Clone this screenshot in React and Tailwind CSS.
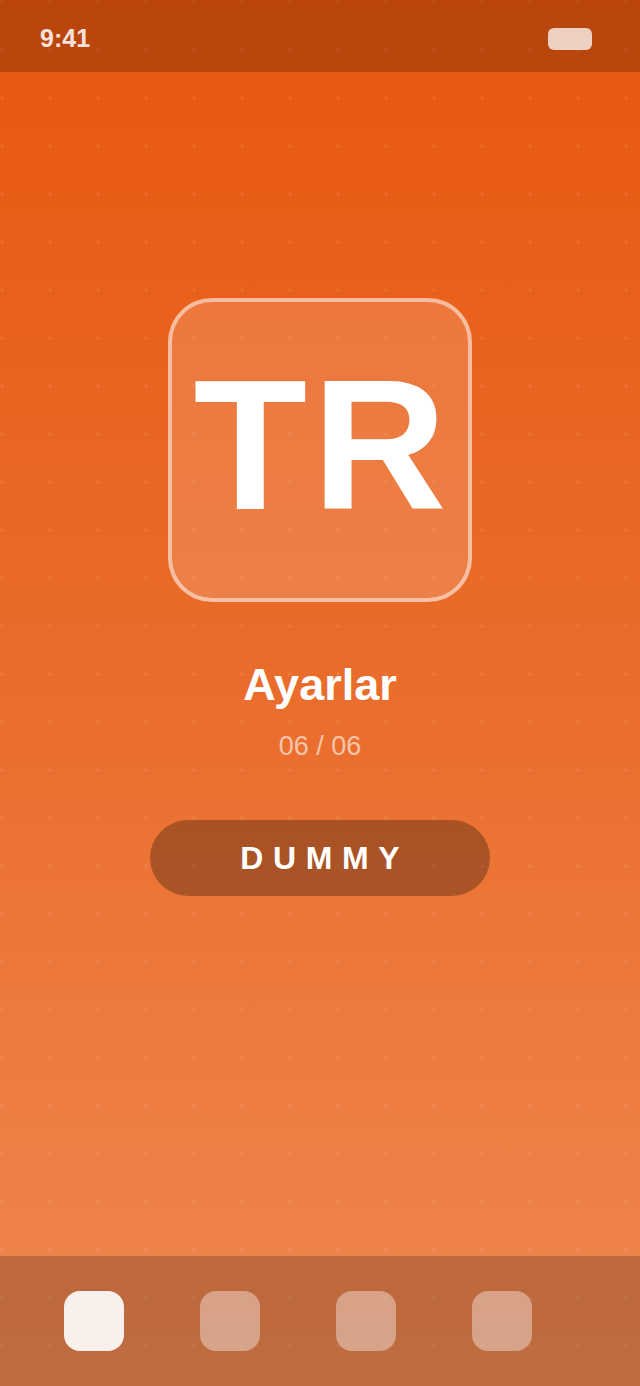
import React from 'react';

// Lesson tile screen: status bar, big letter card, title, counter, action pill, tab dots
const tabs = [
  { id: 'home', active: true },
  { id: 'list', active: false },
  { id: 'stats', active: false },
  { id: 'profile', active: false },
];

export default function App() {
  return (
    <div
      className="w-[640px] h-[1386px] bg-[linear-gradient(180deg,#e8570e_0%,#ea6d2c_50%,#ef8852_100%)] text-white"
      style={{ fontFamily: '"Liberation Sans", Arial, sans-serif' }}
    >
      <div className="flex flex-col h-full bg-[radial-gradient(circle,rgba(255,255,255,0.1)_1.4px,transparent_1.8px)] bg-[length:48px_48px] bg-[position:-22px_-22px]">
        {/* Status bar */}
        <div className="flex items-center justify-between h-[72px] pt-[5px] pl-[40px] pr-[48px] bg-black/20">
          <span className="text-[25px] font-bold leading-none text-white/85">9:41</span>
          <div className="w-[44px] h-[22px] rounded-[6px] bg-white/75" />
        </div>

        {/* Content */}
        <div className="flex-1 flex flex-col items-center pt-[226px]">
          <div className="flex items-center justify-center w-[304px] h-[304px] rounded-[44px] border-4 border-white/50 bg-white/15">
            <span className="text-[186px] font-bold leading-none tracking-[5px] pl-[5px] pb-[10px]">TR</span>
          </div>

          <h1 className="mt-[60px] text-[45px] font-bold leading-none">Ayarlar</h1>
          <p className="mt-[26px] text-[27px] leading-none text-white/60">06 / 06</p>

          <button className="mt-[60px] w-[340px] h-[76px] rounded-full bg-black/28 text-[32px] font-bold tracking-[0.3em] pl-[0.3em] leading-none">
            DUMMY
          </button>
        </div>

        {/* Bottom tabs */}
        <div className="flex items-center gap-[76px] h-[130px] px-[64px] bg-black/20">
          {tabs.map((tab) => (
            <div
              key={tab.id}
              className={`w-[60px] h-[60px] rounded-[16px] ${
                tab.active ? 'bg-white/90' : 'bg-white/38'
              }`}
            />
          ))}
        </div>
      </div>
    </div>
  );
}
